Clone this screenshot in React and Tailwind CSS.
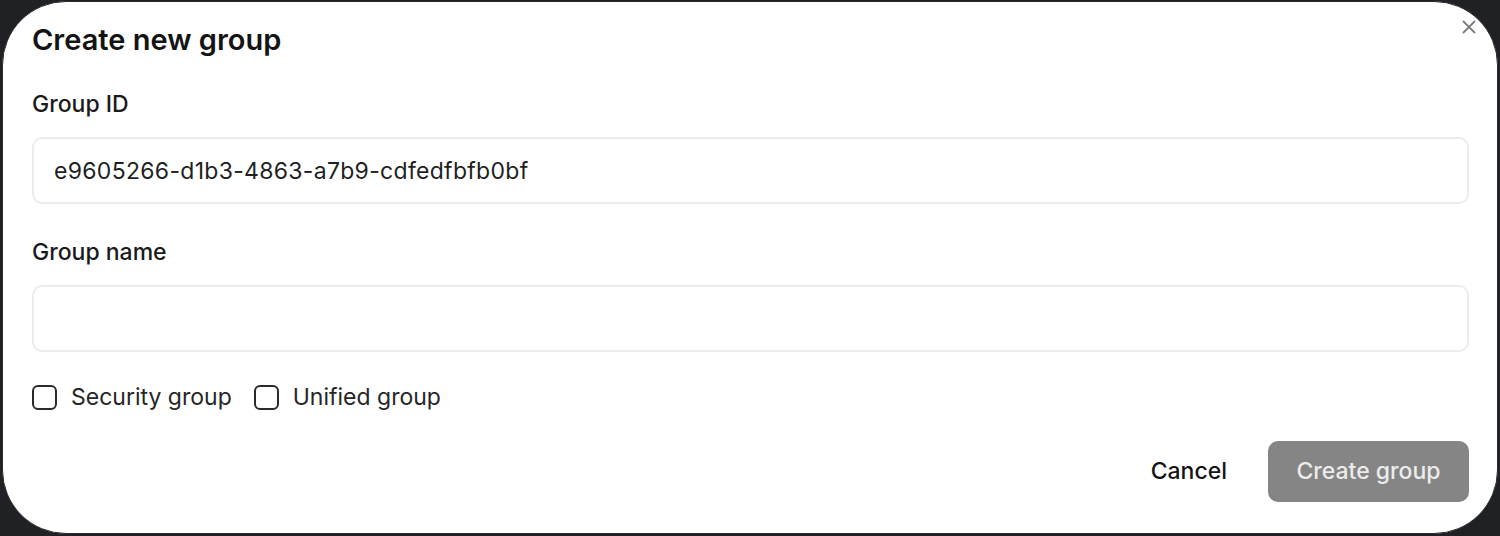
import { useState } from 'react';

const Field = ({ label, value, onChange }) => (
  <div className="flex flex-col">
    <label className="text-[23px] font-medium text-[#1a1a1a] leading-[28px] mb-[19px]">{label}</label>
    <input
      type="text"
      value={value}
      onChange={onChange}
      className="h-[67px] w-full rounded-[10px] border-2 border-[#ececec] bg-white px-[20px] text-[23px] tracking-[0.3px] text-[#1f1f1f] outline-none"
    />
  </div>
);

const Check = ({ label, checked, onChange }) => (
  <label className="flex items-center gap-[14px] cursor-pointer">
    <span
      onClick={onChange}
      className="w-[25px] h-[25px] rounded-[6px] border-2 border-[#2a2a2a] bg-white"
    ></span>
    <span className="text-[23px] leading-[28px] text-[#262626]">{label}</span>
  </label>
);

export default function App() {
  const [groupId, setGroupId] = useState('e9605266-d1b3-4863-a7b9-cdfedfbfb0bf');
  const [groupName, setGroupName] = useState('');
  const [security, setSecurity] = useState(false);
  const [unified, setUnified] = useState(false);

  return (
    <div className="h-[536px] w-[1500px] bg-[#202124] px-[2px] pt-[1px] pb-[2px]" style={{ fontFamily: 'Inter, "Liberation Sans", sans-serif' }}>
      <div className="relative h-full rounded-[64px] bg-white border border-[#2a2b2e] pl-[29px] pr-[28px] pt-[20px]">
        {/* close */}
        <button className="absolute right-[20px] top-[17px] text-[#7d7d7d]">
          <svg width="16" height="16" viewBox="0 0 16 16" fill="none" stroke="currentColor" strokeWidth="1.8">
            <path d="M2 2 L14 14 M14 2 L2 14" />
          </svg>
        </button>

        <h2 className="text-[29px] font-semibold text-[#141414] leading-[36px]">Create new group</h2>

        <div className="mt-[32px] flex flex-col gap-[34px]">
          <Field label="Group ID" value={groupId} onChange={(e) => setGroupId(e.target.value)} />
          <Field label="Group name" value={groupName} onChange={(e) => setGroupName(e.target.value)} />
        </div>

        <div className="mt-[31px] flex items-center gap-[22px]">
          <Check label="Security group" checked={security} onChange={() => setSecurity(!security)} />
          <Check label="Unified group" checked={unified} onChange={() => setUnified(!unified)} />
        </div>

        <div className="mt-[30px] flex justify-end items-center gap-[41px]">
          <button className="text-[23px] font-medium text-[#141414]">Cancel</button>
          <button disabled className="h-[61px] w-[201px] rounded-[10px] bg-[#858585] text-[23px] font-medium text-[#ececec]">
            Create group
          </button>
        </div>
      </div>
    </div>
  );
}
